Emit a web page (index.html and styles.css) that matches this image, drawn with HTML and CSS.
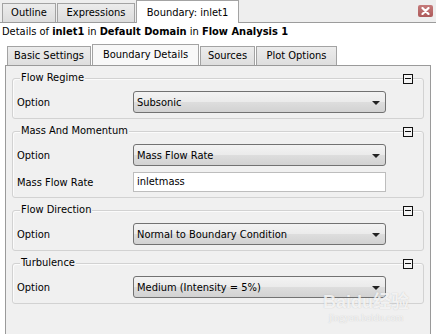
FILE: index.html
```
<!DOCTYPE html>
<html>
<head>
<meta charset="utf-8">
<link rel="stylesheet" href="styles.css">
</head>
<body>
<div class="topbar">
  <div class="tab tab-outline">Outline</div>
  <div class="tab tab-expr">Expressions</div>
  <div class="tab tab-active">Boundary: inlet1</div>
  <div class="spacer"></div>
  <div class="close"><svg width="9" height="8" viewBox="0 0 9 8"><path d="M1.5 1 L7.5 7 M7.5 1 L1.5 7" stroke="#fff" stroke-width="2.2" stroke-linecap="round"/></svg></div>
</div>
<div class="details">Details of <b>inlet1</b> in <b>Default Domain</b> in <b>Flow Analysis 1</b></div>
<div class="subtabs">
  <div class="stab stab-basic">Basic Settings</div>
  <div class="stab stab-active">Boundary Details</div>
  <div class="stab stab-sources">Sources</div>
  <div class="stab stab-plot">Plot Options</div>
</div>
<div class="panel">
  <div class="group">
    <div class="group-head"><span class="group-title">Flow Regime</span><span class="collapse"></span></div>
    <div class="group-box">
      <div class="row"><span class="label">Option</span><div class="combo"><span>Subsonic</span><span class="arrow"></span></div></div>
    </div>
  </div>
  <div class="group">
    <div class="group-head"><span class="group-title">Mass And Momentum</span><span class="collapse"></span></div>
    <div class="group-box">
      <div class="row"><span class="label">Option</span><div class="combo"><span>Mass Flow Rate</span><span class="arrow"></span></div></div>
      <div class="row row-input"><span class="label">Mass Flow Rate</span><div class="input">inletmass</div></div>
    </div>
  </div>
  <div class="group">
    <div class="group-head"><span class="group-title">Flow Direction</span><span class="collapse"></span></div>
    <div class="group-box">
      <div class="row"><span class="label">Option</span><div class="combo"><span>Normal to Boundary Condition</span><span class="arrow"></span></div></div>
    </div>
  </div>
  <div class="group">
    <div class="group-head"><span class="group-title">Turbulence</span><span class="collapse"></span></div>
    <div class="group-box">
      <div class="row"><span class="label">Option</span><div class="combo"><span>Medium (Intensity = 5%)</span><span class="arrow"></span></div></div>
    </div>
  </div>
  <div class="watermark"><span class="wm-main">Bai<span class="wm-du">du</span>经验</span><span class="wm-sub">jingyan.baidu.com</span></div>
</div>
</body>
</html>
```
FILE: styles.css
```
* { box-sizing: border-box; }
html, body { margin: 0; padding: 0; background: #fff; }
body {
  width: 436px;
  height: 334px;
  overflow: hidden;
  font-family: "DejaVu Sans Condensed", "DejaVu Sans", sans-serif;
  font-size: 11px;
  color: #000;
}
.topbar {
  height: 23px;
  background: #eeeeee;
  border-bottom: 1px solid #9c9c9c;
  display: flex;
  align-items: flex-end;
  padding-left: 2px;
}
.tab {
  height: 19px;
  line-height: 18px;
  text-align: center;
  border: 1px solid #a3a3a3;
  border-bottom: none;
  background: linear-gradient(#ececec, #dcdcdc);
  margin-right: 1px;
  margin-bottom: 0;
}
.tab-outline { width: 54px; }
.tab-expr { width: 78px; }
.tab-active {
  width: 103px;
  height: 23px;
  line-height: 24px;
  background: #fff;
  margin-bottom: -1px;
  border-color: #a3a3a3;
}
.spacer { flex: 1; }
.close {
  align-self: flex-start;
  margin-top: 5px;
  margin-right: 3px;
  width: 15px;
  height: 12px;
  border-radius: 2px;
  background: linear-gradient(#c57a7a, #ad5a5a);
  display: flex;
  align-items: center;
  justify-content: center;
}
.details {
  height: 18px;
  line-height: 18px;
  padding-left: 2px;
  white-space: nowrap;
}
.subtabs {
  height: 24px;
  display: flex;
  align-items: flex-end;
  padding-left: 7px;
}
.stab {
  height: 19px;
  line-height: 18px;
  text-align: center;
  border: 1px solid #a3a3a3;
  border-bottom: none;
  background: linear-gradient(#ececec, #dedede);
  margin-right: 1px;
}
.stab-basic { width: 84px; }
.stab-active {
  width: 107px;
  height: 22px;
  line-height: 20px;
  background: #f8f8f8;
  margin-bottom: -1px;
  position: relative;
}
.stab-sources { width: 55px; }
.stab-plot { width: 81px; }
.panel {
  position: relative;
  margin-left: 5px;
  width: 426px;
  height: 280px;
  border: 1px solid #9a9a9a;
  background: #f0f0f0;
  padding: 5px 6px 0 6px;
}
.group { margin-bottom: 5px; }
.group-head {
  position: relative;
  z-index: 1;
  height: 14px;
  line-height: 14px;
  display: flex;
  justify-content: space-between;
  align-items: flex-start;
  padding: 0 11px 0 8px;
}
.group-title {
  background: #f0f0f0;
  padding: 0 1px;
}
.collapse {
  margin-top: 3px;
  width: 10px;
  height: 10px;
  border: 1px solid #111;
  background: #f4f4f4;
  position: relative;
}
.collapse::after {
  content: "";
  position: absolute;
  left: 1px;
  right: 1px;
  top: 3px;
  height: 1px;
  background: #111;
}
.group-box {
  margin-top: -7px;
  border: 1px solid #d2d2d2;
  border-radius: 3px;
  box-shadow: inset 1px 1px 0 #fbfbfb;
  padding: 12px 4px 5px 4px;
}
.row {
  display: flex;
  align-items: center;
  height: 22px;
}
.row-input { margin-top: 6px; height: 20px; }
.label { width: 116px; flex: 0 0 116px; white-space: nowrap; }
.combo {
  width: 253px;
  height: 22px;
  border: 1px solid #727272;
  border-radius: 3px;
  background: linear-gradient(#f3f3f3 0%, #ebebeb 48%, #dddddd 52%, #d2d2d2 100%);
  display: flex;
  align-items: center;
  justify-content: space-between;
  padding: 0 5px 0 3px;
  white-space: nowrap;
}
.arrow {
  width: 0;
  height: 0;
  border-left: 4px solid transparent;
  border-right: 4px solid transparent;
  border-top: 4px solid #222;
  margin-top: 2px;
}
.input {
  width: 253px;
  height: 20px;
  line-height: 18px;
  border: 1px solid #bdbdbd;
  background: #fff;
  padding-left: 3px;
}
.watermark {
  position: absolute;
  left: 312px;
  top: 226px;
  width: 96px;
  display: flex;
  flex-direction: column;
  align-items: center;
  color: rgba(255,255,255,0.8);
  pointer-events: none;
  text-shadow: 0 0 1px rgba(130,130,130,0.45);
}
.wm-main { font-size: 18px; line-height: 20px; font-weight: bold; font-family: "Liberation Sans", "Noto Sans CJK SC", sans-serif; }
.wm-sub { font-size: 10px; line-height: 12px; font-family: "Liberation Serif", serif; }
```
